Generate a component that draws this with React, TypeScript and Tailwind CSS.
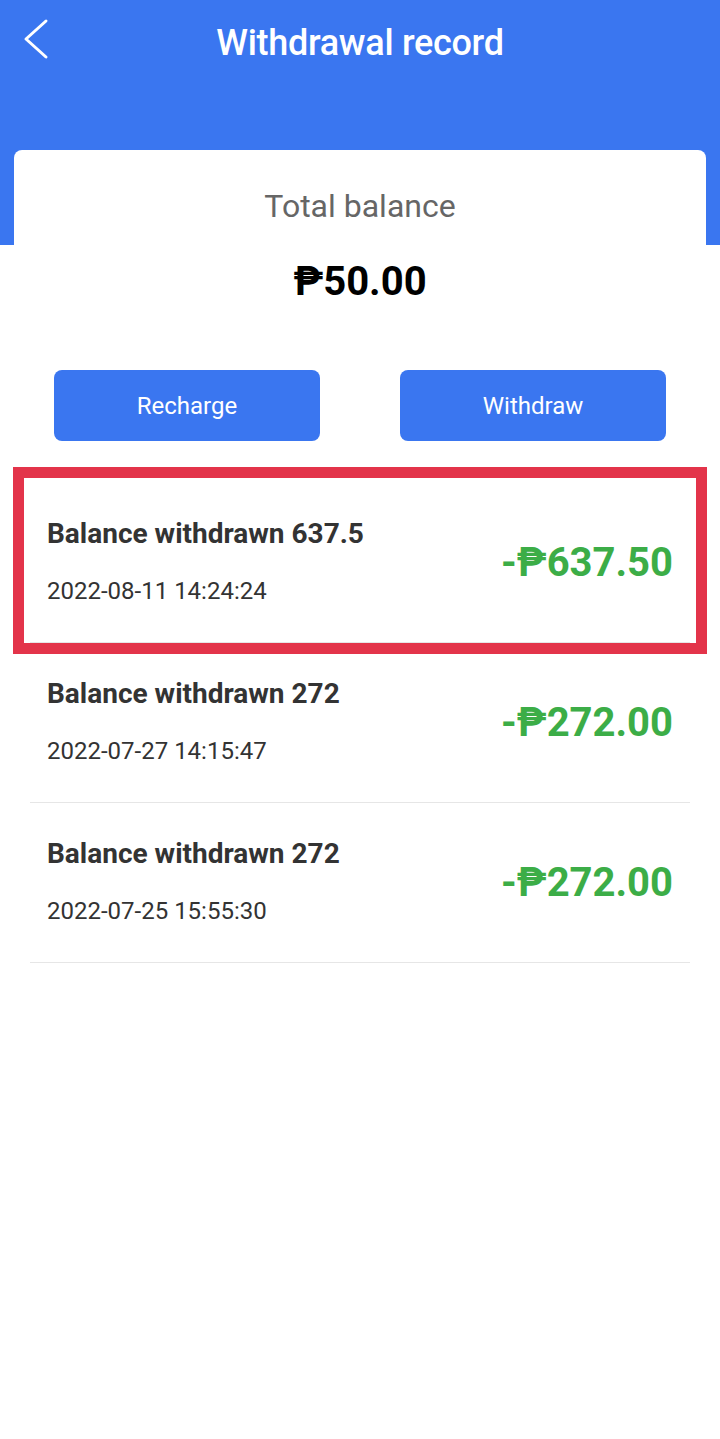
interface RecordItem {
  title: string;
  time: string;
  amount: string;
}

const records: RecordItem[] = [
  { title: "Balance withdrawn 637.5", time: "2022-08-11 14:24:24", amount: "-₱637.50" },
  { title: "Balance withdrawn 272", time: "2022-07-27 14:15:47", amount: "-₱272.00" },
  { title: "Balance withdrawn 272", time: "2022-07-25 15:55:30", amount: "-₱272.00" },
];

export default function App() {
  return (
    <div className="w-[720px] min-h-[1439px] bg-white font-['Roboto','Noto_Sans',sans-serif]">
      {/* Header */}
      <div className="h-[245px] bg-[#3a76f0] text-white">
        <div className="relative h-[85px] flex items-center justify-center">
          <button className="absolute left-[22px] top-[18px] text-white">
            <svg width="28" height="42" viewBox="0 0 28 42" fill="none">
              <polyline points="24,3 4,21 24,39" stroke="white" strokeWidth="3" strokeLinecap="round" strokeLinejoin="round" />
            </svg>
          </button>
          <h1 className="text-[36px] font-medium tracking-[-0.3px]">Withdrawal record</h1>
        </div>
      </div>

      {/* Balance card */}
      <div className="relative -mt-[95px] mx-[14px] bg-white rounded-lg pt-[36px] flex flex-col items-center">
        <div className="text-[32px] leading-[40px] text-[#666]">Total balance</div>
        <div className="mt-[33px] text-[40px] leading-[46px] font-bold text-black">₱50.00</div>
        <div className="w-full mt-[65px] px-[40px] flex justify-between">
          <button className="w-[266px] h-[71px] rounded-lg bg-[#3a76f0] text-white text-[24px]">Recharge</button>
          <button className="w-[266px] h-[71px] rounded-lg bg-[#3a76f0] text-white text-[24px]">Withdraw</button>
        </div>
      </div>

      {/* Records */}
      <div className="mt-[42px] mx-[30px]">
        {records.map((r, i) => (
          <div key={i} className="relative h-[160px] border-b border-[#e6e6e6] px-[17px] flex items-center justify-between">
            <div className="flex flex-col">
              <div className="text-[28px] leading-[30px] font-bold text-[#333]">{r.title}</div>
              <div className="mt-[27px] text-[24px] leading-[30px] text-[#333]">{r.time}</div>
            </div>
            <div className="text-[40px] font-bold text-[#3cad47]">{r.amount}</div>
            {i === 0 && (
              <div className="absolute -left-[17px] -right-[17px] -top-[16px] -bottom-[12px] border-[11px] border-[#e3344a] pointer-events-none" />
            )}
          </div>
        ))}
      </div>
    </div>
  );
}
